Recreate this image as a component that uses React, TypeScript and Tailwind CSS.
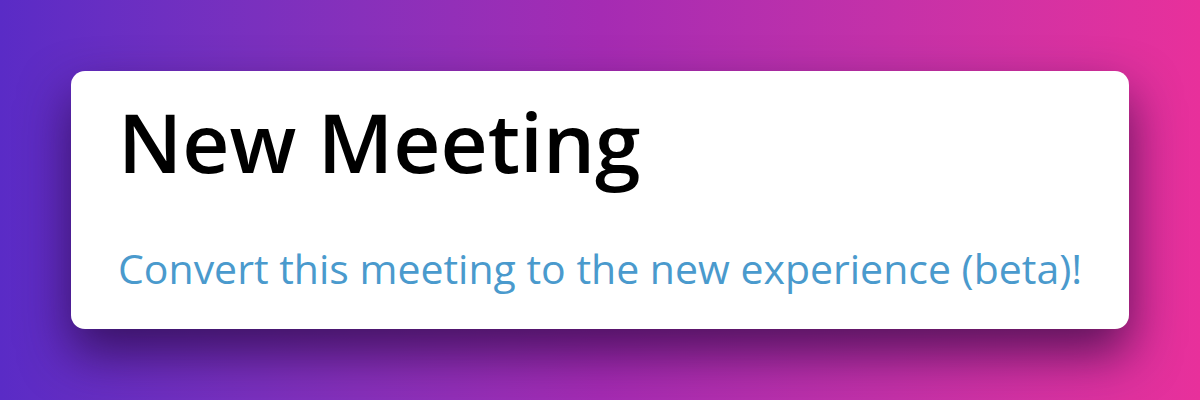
export default function App() {
  return (
    <div className="w-[1200px] h-[400px] overflow-hidden bg-gradient-to-r from-[#5a2bc6] via-[#a52bb3] to-[#e8309b] px-[71px] pt-[71px] font-['Open_Sans',sans-serif]">
      <div className="h-[258px] rounded-[14px] bg-white pl-[47px] pr-[20px] pt-[20px] shadow-[0_24px_50px_rgba(35,5,60,0.7)]">
        <h1 className="text-[82px] font-semibold leading-[100px] text-black">New Meeting</h1>
        <a className="mt-[52px] block whitespace-nowrap text-[41px] leading-[50px] text-[#4a9acd]">
          Convert this meeting to the new experience (beta)!
        </a>
      </div>
    </div>
  );
}
